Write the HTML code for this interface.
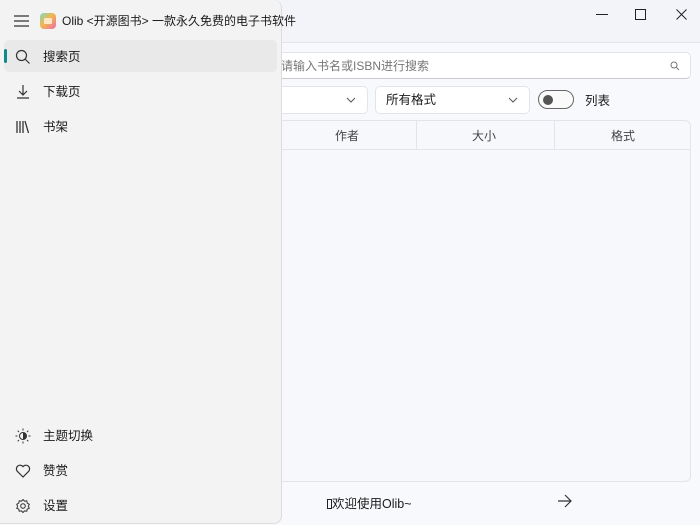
<!DOCTYPE html>
<html><head><meta charset="utf-8"><style>
*{box-sizing:border-box;margin:0;padding:0}
body{width:700px;height:525px;overflow:hidden;background:#f3f4f9;font-family:"Liberation Sans","Noto Sans CJK SC",sans-serif;font-size:12.5px;color:#1a1a1a;position:relative}
.main{position:absolute;left:0;top:42px;width:700px;height:483px;background:#f8f9fc;border-top:1px solid #e3e4ea}
.search{position:absolute;left:262px;top:52px;width:429px;height:27px;background:#fff;border:1px solid #e3e4ea;border-bottom:1px solid #c9c9cf;border-radius:5px;color:#777;font-size:12px;line-height:26px;padding-left:18px}
.dd{position:absolute;top:86px;height:28px;background:#fff;border:1px solid #e3e4ea;border-radius:5px;line-height:26px;padding-left:10px;font-size:12.5px}
.chev{position:absolute;right:10px;top:7px;width:12px;height:12px}
.table{position:absolute;left:262px;top:120px;width:429px;height:362px;background:#f7f8fc;border:1px solid #e3e4ea;border-radius:6px}
.th{position:absolute;top:0;height:29px;border-bottom:1px solid #e3e4ea;width:100%}
.th span{position:absolute;top:6px;font-size:12px;color:#444}
.pane{position:absolute;left:0;top:0;width:282px;height:524px;background:#f3f3f3;border:1px solid #dcdcdc;border-left:none;border-top:none;border-radius:0 8px 8px 0}
.item{position:absolute;left:4px;width:273px;height:32px;font-size:12.5px}
.item .t{position:absolute;left:39px;top:6px;white-space:nowrap}
.item svg{position:absolute;left:11px;top:9px}
</style></head><body>
<div class="main"></div>
<svg style="position:absolute;left:596px;top:14px" width="12" height="1"><rect width="12" height="1" fill="#222"/></svg>
<svg style="position:absolute;left:635px;top:9px" width="11" height="11"><rect x="0.5" y="0.5" width="10" height="10" fill="none" stroke="#222"/></svg>
<svg style="position:absolute;left:676px;top:9px" width="11" height="11"><path d="M0.5 0.5L10.5 10.5M10.5 0.5L0.5 10.5" stroke="#222"/></svg>
<div class="search">请输入书名或ISBN进行搜索
<svg style="position:absolute;right:10px;top:8px" width="10" height="10"><circle cx="4" cy="4" r="3" fill="none" stroke="#777"/><path d="M6.2 6.2L9 9" stroke="#777"/></svg></div>
<div class="dd" style="left:262px;width:106px"><svg class="chev"><path d="M2 4L6 8L10 4" fill="none" stroke="#555"/></svg></div>
<div class="dd" style="left:375px;width:155px">所有格式<svg class="chev"><path d="M2 4L6 8L10 4" fill="none" stroke="#555"/></svg></div>
<div style="position:absolute;left:538px;top:90px;width:36px;height:19px;border:1px solid #666;border-radius:10px;background:#fafafa"><div style="position:absolute;left:4px;top:4px;width:10px;height:10px;border-radius:50%;background:#555"></div></div>
<div style="position:absolute;left:585px;top:90px">列表</div>
<div class="table"><div class="th">
<span style="left:72px">作者</span><span style="left:209px">大小</span><span style="left:348px">格式</span>
<div style="position:absolute;left:153px;top:0;width:1px;height:29px;background:#e3e4ea"></div>
<div style="position:absolute;left:291px;top:0;width:1px;height:29px;background:#e3e4ea"></div>
</div></div>
<div style="position:absolute;left:327px;top:493px;font-size:12.5px"><span style="display:inline-block;width:5px;height:10px;border:1px solid #222;vertical-align:-1px"></span>欢迎使用Olib~</div>
<svg style="position:absolute;left:557px;top:494px" width="15" height="14"><path d="M1 7H14M8 1L14 7L8 13" fill="none" stroke="#333" stroke-width="1.2"/></svg>

<div class="pane">
<svg style="position:absolute;left:14px;top:15px" width="15" height="12"><path d="M0 1H15M0 6H15M0 11H15" stroke="#333" stroke-width="1.2"/></svg>
<div style="position:absolute;left:40px;top:13px;width:16px;height:16px;border-radius:4px;background:linear-gradient(135deg,#7fd6c8,#f2b84b 45%,#f06ab0)"><div style="position:absolute;left:4px;top:5px;width:8px;height:6px;background:#fde8c8;border-radius:1px"></div></div>
<div style="position:absolute;left:62px;top:12px;font-size:12px;white-space:nowrap">Olib &lt;开源图书&gt; 一款永久免费的电子书软件</div>
<div class="item" style="top:40px;background:#e9e9e9;border-radius:5px">
<div style="position:absolute;left:0;top:9px;width:3px;height:14px;background:#0f8b8d;border-radius:2px"></div>
<svg width="16" height="16"><circle cx="6.5" cy="6.5" r="5" fill="none" stroke="#333" stroke-width="1.2"/><path d="M10 10L14.5 14.5" stroke="#333" stroke-width="1.2"/></svg><span class="t">搜索页</span></div>
<div class="item" style="top:75px"><svg width="16" height="16"><path d="M8 1V11M4 7L8 11L12 7M2 14H14" fill="none" stroke="#333" stroke-width="1.2"/></svg><span class="t">下载页</span></div>
<div class="item" style="top:110px"><svg width="16" height="16"><path d="M2 2V14M5 2V14M8 2V14M10 2L13.5 14" fill="none" stroke="#333" stroke-width="1.3"/></svg><span class="t">书架</span></div>
<div class="item" style="top:419px"><svg width="16" height="16"><circle cx="8" cy="8" r="3.5" fill="none" stroke="#333"/><path d="M8 4.5A3.5 3.5 0 0 1 8 11.5Z" fill="#333"/><path d="M8 0.5V2.5M8 13.5V15.5M0.5 8H2.5M13.5 8H15.5M2.7 2.7L4 4M12 12L13.3 13.3M2.7 13.3L4 12M12 4L13.3 2.7" stroke="#333"/></svg><span class="t">主题切换</span></div>
<div class="item" style="top:454px"><svg width="16" height="16"><path d="M8 14L2.2 8.2A3.3 3.3 0 0 1 8 3.6A3.3 3.3 0 0 1 13.8 8.2Z" fill="none" stroke="#333" stroke-width="1.2"/></svg><span class="t">赞赏</span></div>
<div class="item" style="top:489px"><svg width="16" height="16"><circle cx="8" cy="8" r="2.3" fill="none" stroke="#333"/><path d="M8 1.5L9.5 3.2L11.8 2.8L12.2 5.1L14.3 6.3L13.3 8.4L14.3 10.3L12.2 11.1L11.8 13.3L9.5 12.9L8 14.5L6.5 12.9L4.2 13.3L3.8 11.1L1.7 10.3L2.7 8.4L1.7 6.3L3.8 5.1L4.2 2.8L6.5 3.2Z" fill="none" stroke="#333" stroke-linejoin="round"/></svg><span class="t">设置</span></div>
</div>
</body></html>
